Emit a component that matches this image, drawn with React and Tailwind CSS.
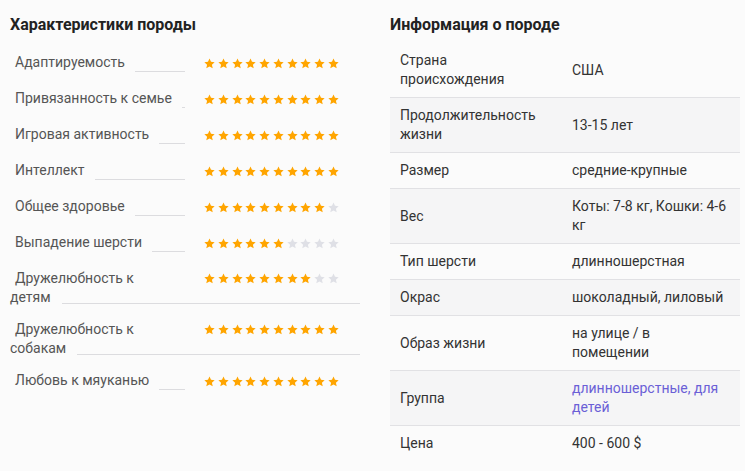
// App.jsx - breed characteristics + breed info table
import React from "react";

const traits = [
  { label: "Адаптируемость", value: 10 },
  { label: "Привязанность к семье", value: 10 },
  { label: "Игровая активность", value: 10 },
  { label: "Интеллект", value: 10 },
  { label: "Общее здоровье", value: 9 },
  { label: "Выпадение шерсти", value: 6 },
  { label: "Дружелюбность к", rest: "детям", value: 8 },
  { label: "Дружелюбность к", rest: "собакам", value: 10 },
  { label: "Любовь к мяуканью", value: 10 },
];

const info = [
  { label: "Страна происхождения", value: "США" },
  { label: "Продолжительность жизни", value: "13-15 лет" },
  { label: "Размер", value: "средние-крупные" },
  { label: "Вес", value: "Коты: 7-8 кг, Кошки: 4-6 кг" },
  { label: "Тип шерсти", value: "длинношерстная" },
  { label: "Окрас", value: "шоколадный, лиловый" },
  { label: "Образ жизни", value: "на улице / в помещении" },
  { label: "Группа", links: ["длинношерстные", "для детей"] },
  { label: "Цена", value: "400 - 600 $" },
];

function Star({ filled }) {
  return (
    <svg viewBox="0 0 24 24" className="w-[11px] h-[11px] shrink-0">
      <path
        d="M12 1.2l3.3 7.2 7.9.8-5.9 5.3 1.7 7.8L12 18.3l-7 4 1.7-7.8L.8 9.2l7.9-.8z"
        fill={filled ? "#ffa500" : "#dfe0e6"}
      />
    </svg>
  );
}

function Stars({ value }) {
  return (
    <div className="flex items-center gap-[2.75px] pt-[2px]">
      {[...Array(10)].map((_, i) => (
        <Star key={i} filled={i < value} />
      ))}
    </div>
  );
}

function TraitRow({ trait }) {
  // Two-line labels: the leader line runs under the second line across the whole column
  if (trait.rest) {
    return (
      <div className="mb-[12px]">
        <div className="flex h-[19px] items-center">
          <span className="w-[194px] pl-[5px] leading-5 whitespace-nowrap">{trait.label}</span>
          <Stars value={trait.value} />
        </div>
        <div className="flex h-5">
          <span className="leading-5">{trait.rest}</span>
          <div className="flex-1 ml-[11px] h-[17px] border-b border-[#dcdcdf]" />
        </div>
      </div>
    );
  }

  return (
    <div className="flex h-5 mb-4">
      <div className="flex w-[175px]">
        <span className="pl-[5px] leading-5 whitespace-nowrap">{trait.label}</span>
        <div className="flex-1 ml-[10px] border-b border-[#dcdcdf]" />
      </div>
      <div className="ml-[19px] flex items-center">
        <Stars value={trait.value} />
      </div>
    </div>
  );
}

export default function App() {
  return (
    <div
      className="min-h-screen w-full bg-[#fbfbfb] pl-[10px] pr-[5px] pt-[13px] flex gap-[30px]"
      style={{ fontFamily: "Roboto, 'Liberation Sans', sans-serif" }}
    >
      {/* Characteristics */}
      <div className="w-[350px] shrink-0">
        <h2 className="text-base leading-6 font-bold text-[#222] mb-[15px]">Характеристики породы</h2>
        <div className="text-sm text-[#555]">
          {traits.map((t, i) => (
            <TraitRow key={i} trait={t} />
          ))}
        </div>
      </div>

      {/* Breed info */}
      <div className="w-[350px] shrink-0">
        <h2 className="text-base leading-6 font-bold text-[#222] mb-[6px]">Информация о породе</h2>
        <table className="w-full border-collapse text-sm text-[#333]">
          <tbody>
            {info.map((row, i) => (
              <tr
                key={i}
                className={`${i % 2 === 1 ? "bg-[#f5f5f6]" : ""} ${
                  i < info.length - 1 ? "border-b border-[#e1e1e4]" : ""
                }`}
              >
                <td className="w-[172px] pl-[10px] pr-[10px] py-2 leading-[19px] align-middle">{row.label}</td>
                <td className="pl-[10px] pr-[13px] py-2 leading-[19px] align-middle">
                  {row.links ? (
                    <span className="text-[#6b5fd6]">
                      <a href="#">{row.links[0]}</a>, <a href="#">{row.links[1]}</a>
                    </span>
                  ) : (
                    row.value
                  )}
                </td>
              </tr>
            ))}
          </tbody>
        </table>
      </div>
    </div>
  );
}
